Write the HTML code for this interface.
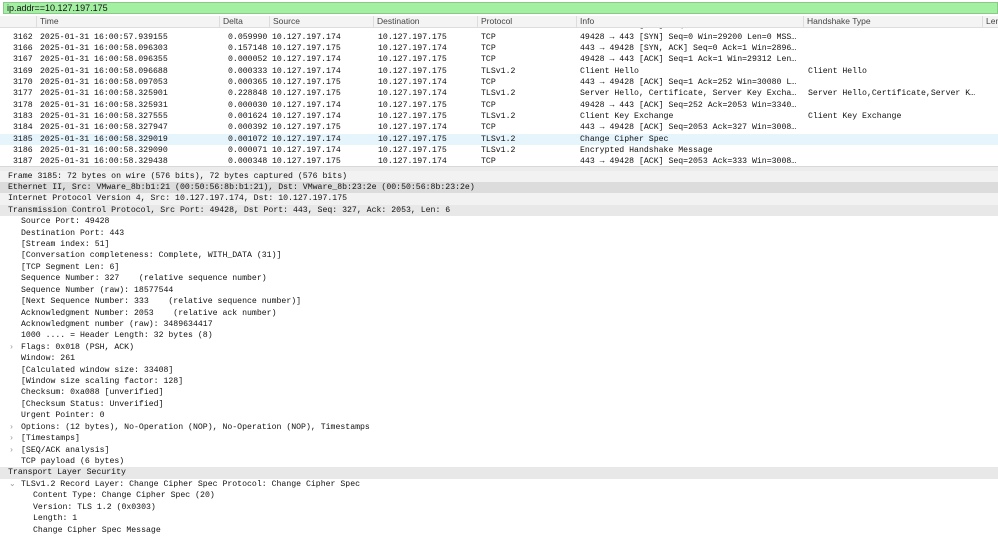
<!DOCTYPE html>
<html><head><meta charset="utf-8"><style>
body{margin:0;width:998px;height:545px;overflow:hidden;background:#fff;position:relative;font-family:"Liberation Mono",monospace;font-size:8.2px;color:#111}
.filter{position:absolute;left:3px;top:2px;width:995px;height:12px;background:#a3f0a3;border:1px solid #8cc88c;box-sizing:border-box;font-family:"Liberation Sans",sans-serif;font-size:9px;line-height:10px;padding-left:3px;color:#111;z-index:3}
.hdr{position:absolute;left:0;top:16px;width:998px;height:11px;background:#f4f4f4;border-bottom:1px solid #ddd;font-family:"Liberation Sans",sans-serif;font-size:8.5px;color:#444;z-index:2}
.hdr span{position:absolute;top:0;line-height:11px;padding-left:3px;border-left:1px solid #ddd;height:11px}
.r{position:absolute;left:0;width:998px;height:11.4px}
.r span{position:absolute;top:0;line-height:11.4px;white-space:pre}
.d{position:absolute;left:0;width:998px;height:11.4px;line-height:11.4px;white-space:pre}
</style></head><body>
<div style="position:absolute;left:0;top:14px;width:998px;height:2px;background:#fff;z-index:2"></div>
<div class="filter">ip.addr==10.127.197.175</div>
<div class="hdr"><span style="left:36px">Time</span><span style="left:219px">Delta</span><span style="left:269px">Source</span><span style="left:373px">Destination</span><span style="left:477px">Protocol</span><span style="left:576px">Info</span><span style="left:803px">Handshake Type</span><span style="left:982px">Len</span></div>
<div id="pl"></div>
<div style="position:absolute;left:0;top:166px;width:998px;height:4px;background:#ececec;border-top:1px solid #d8d8d8;border-bottom:1px solid #d8d8d8"></div>
<div id="dt"></div>
<script>
var rows=[
["3160","2025-01-31 16:00:57.879165","0.000000","10.127.197.174","10.127.197.175","TCP","49428 → 443 [RST] Seq=323 Win=2235 Len=0 MSS…",""],
["3162","2025-01-31 16:00:57.939155","0.059990","10.127.197.174","10.127.197.175","TCP","49428 → 443 [SYN] Seq=0 Win=29200 Len=0 MSS…",""],
["3166","2025-01-31 16:00:58.096303","0.157148","10.127.197.175","10.127.197.174","TCP","443 → 49428 [SYN, ACK] Seq=0 Ack=1 Win=2896…",""],
["3167","2025-01-31 16:00:58.096355","0.000052","10.127.197.174","10.127.197.175","TCP","49428 → 443 [ACK] Seq=1 Ack=1 Win=29312 Len…",""],
["3169","2025-01-31 16:00:58.096688","0.000333","10.127.197.174","10.127.197.175","TLSv1.2","Client Hello","Client Hello"],
["3170","2025-01-31 16:00:58.097053","0.000365","10.127.197.175","10.127.197.174","TCP","443 → 49428 [ACK] Seq=1 Ack=252 Win=30080 L…",""],
["3177","2025-01-31 16:00:58.325901","0.228848","10.127.197.175","10.127.197.174","TLSv1.2","Server Hello, Certificate, Server Key Excha…","Server Hello,Certificate,Server K…"],
["3178","2025-01-31 16:00:58.325931","0.000030","10.127.197.174","10.127.197.175","TCP","49428 → 443 [ACK] Seq=252 Ack=2053 Win=3340…",""],
["3183","2025-01-31 16:00:58.327555","0.001624","10.127.197.174","10.127.197.175","TLSv1.2","Client Key Exchange","Client Key Exchange"],
["3184","2025-01-31 16:00:58.327947","0.000392","10.127.197.175","10.127.197.174","TCP","443 → 49428 [ACK] Seq=2053 Ack=327 Win=3008…",""],
["3185","2025-01-31 16:00:58.329019","0.001072","10.127.197.174","10.127.197.175","TLSv1.2","Change Cipher Spec",""],
["3186","2025-01-31 16:00:58.329090","0.000071","10.127.197.174","10.127.197.175","TLSv1.2","Encrypted Handshake Message",""],
["3187","2025-01-31 16:00:58.329438","0.000348","10.127.197.175","10.127.197.174","TCP","443 → 49428 [ACK] Seq=2053 Ack=333 Win=3008…",""]];
var xs=[13,40,228,272,378,481,580,808],h="";
rows.forEach(function(r,i){var t=31.5+(i-1)*11.36;h+='<div class="r" style="top:'+t+'px;'+(r[0]=="3185"?'background:#e6f4fc':'')+'">';
r.forEach(function(c,j){h+='<span style="left:'+xs[j]+'px">'+c+'</span>'});h+='</div>'});
document.getElementById('pl').innerHTML=h;
var d=[
[0,"Frame 3185: 72 bytes on wire (576 bits), 72 bytes captured (576 bits)","#f2f2f2"],
[0,"Ethernet II, Src: VMware_8b:b1:21 (00:50:56:8b:b1:21), Dst: VMware_8b:23:2e (00:50:56:8b:23:2e)","#dcdcdc"],
[0,"Internet Protocol Version 4, Src: 10.127.197.174, Dst: 10.127.197.175","#f2f2f2"],
[0,"Transmission Control Protocol, Src Port: 49428, Dst Port: 443, Seq: 327, Ack: 2053, Len: 6","#e8e8e8"],
[1,"Source Port: 49428"],[1,"Destination Port: 443"],[1,"[Stream index: 51]"],
[1,"[Conversation completeness: Complete, WITH_DATA (31)]"],[1,"[TCP Segment Len: 6]"],
[1,"Sequence Number: 327    (relative sequence number)"],[1,"Sequence Number (raw): 18577544"],
[1,"[Next Sequence Number: 333    (relative sequence number)]"],
[1,"Acknowledgment Number: 2053    (relative ack number)"],[1,"Acknowledgment number (raw): 3489634417"],
[1,"1000 .... = Header Length: 32 bytes (8)"],[1,"Flags: 0x018 (PSH, ACK)",0,1],[1,"Window: 261"],
[1,"[Calculated window size: 33408]"],[1,"[Window size scaling factor: 128]"],[1,"Checksum: 0xa088 [unverified]"],
[1,"[Checksum Status: Unverified]"],[1,"Urgent Pointer: 0"],
[1,"Options: (12 bytes), No-Operation (NOP), No-Operation (NOP), Timestamps",0,1],[1,"[Timestamps]",0,1],[1,"[SEQ/ACK analysis]",0,1],
[1,"TCP payload (6 bytes)"],[0,"Transport Layer Security","#e8e8e8"],
[1,"TLSv1.2 Record Layer: Change Cipher Spec Protocol: Change Cipher Spec",0,2],
[2,"Content Type: Change Cipher Spec (20)"],[2,"Version: TLS 1.2 (0x0303)"],[2,"Length: 1"],[2,"Change Cipher Spec Message"]];
h="";d.forEach(function(l,i){var t=170.5+i*11.42;var x=[8,21,33][l[0]];
h+='<div class="d" style="top:'+t+'px;'+(l[2]?'background:'+l[2]:'')+'">';
if(l[3])h+='<span style="position:absolute;left:'+(x-12)+'px;color:#999">'+(l[3]==1?'›':'⌄')+'</span>';
h+='<span style="position:absolute;left:'+x+'px">'+l[1]+'</span></div>'});
document.getElementById('dt').innerHTML=h;
</script>
</body></html>
